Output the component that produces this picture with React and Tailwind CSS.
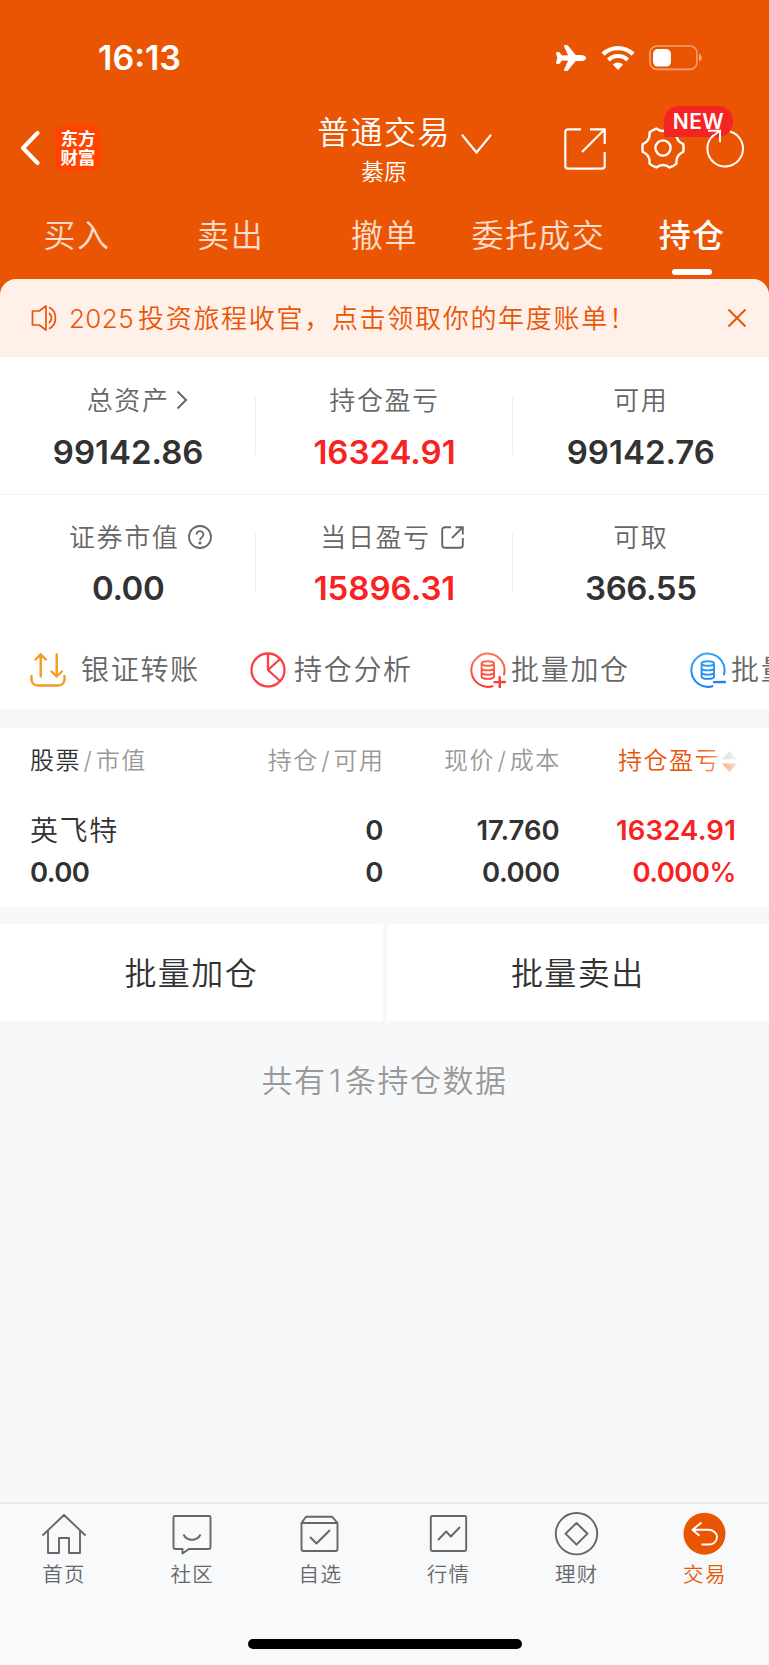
import { IoAirplane } from 'react-icons/io5'

const TABS = ['买入', '卖出', '撤单', '委托成交', '持仓']

const polar = (deg, r) => {
  const t = (deg * Math.PI) / 180
  return `${(22 + r * Math.cos(t)).toFixed(2)} ${(22 + r * Math.sin(t)).toFixed(2)}`
}

// six flat lobes joined by scooped valleys
const gearPath = `M${polar(-11, 20.6)}${[0, 60, 120, 180, 240, 300]
  .map((d) => `Q${polar(d, 20.9)} ${polar(d + 11, 20.6)}Q${polar(d + 30, 14.5)} ${polar(d + 49, 20.6)}`)
  .join('')}Z`

const StatusBar = () => (
  <div className="flex h-[105px] items-start justify-between pl-[98px] pr-[66px] pt-[37px]">
    <span className="text-[34px] font-semibold leading-[42px]">16:13</span>
    <div className="flex h-[42px] items-center">
      <IoAirplane size={32} className="mr-[14px]" />
      <svg width="34" height="26" viewBox="0 0 34 26" className="mr-[14px]" fill="none" stroke="currentColor">
        <path d="M2 9.2a21.5 21.5 0 0 1 30 0" strokeWidth="4.4" />
        <path d="M7.4 14.9a13.8 13.8 0 0 1 19.2 0" strokeWidth="4.2" />
        <path d="M17 25l-5.2-5.4a7.6 7.6 0 0 1 10.4 0z" fill="currentColor" stroke="none" />
      </svg>
      <svg width="54" height="26" viewBox="0 0 54 26" fill="none">
        <rect x="1" y="1" width="47" height="23.4" rx="7" stroke="white" strokeOpacity=".45" strokeWidth="1.6" />
        <rect x="4" y="4" width="18" height="17.6" rx="5" fill="white" />
        <path d="M50 9v7.6c1.6-.6 2.7-2 2.7-3.8S51.6 9.6 50 9z" fill="white" fillOpacity=".5" />
      </svg>
    </div>
  </div>
)

const NavBar = () => (
  <div className="flex h-[86px] items-center">
    <div className="flex w-[318px] items-center pl-[20px]">
      <svg width="20" height="34" viewBox="0 0 20 34" fill="none" stroke="currentColor" strokeWidth="4" strokeLinecap="round" strokeLinejoin="round">
        <path d="M17.5 2L3 17l14.5 15" />
      </svg>
      <div className="ml-[15px] flex h-[46px] w-[46px] flex-col items-center justify-center rounded-[10px] bg-[#ff4400] text-[17.5px] font-bold leading-[19px]">
        <span>东方</span>
        <span>财富</span>
      </div>
    </div>
    <div className="flex w-[132px] flex-col items-center pt-[6px]">
      <span className="whitespace-nowrap text-[32px] leading-[42px] tracking-[1.4px]">普通交易</span>
      <span className="text-[23px] leading-[36px]">綦原</span>
    </div>
    <svg width="31" height="21" viewBox="0 0 31 21" className="-mt-2 ml-[11px]" fill="none" stroke="currentColor" strokeWidth="2.2" strokeLinecap="round">
      <path d="M1.5 1.5l14 17 14-17" />
    </svg>
    <svg width="42" height="42" viewBox="0 0 42 42" className="ml-[72px] mt-[2px]" fill="none" stroke="currentColor" strokeWidth="2.2" strokeLinejoin="round">
      <path d="M17 1.3H4A2.7 2.7 0 0 0 1.3 4v34A2.7 2.7 0 0 0 4 40.7h34a2.7 2.7 0 0 0 2.7-2.7V24" />
      <path d="M26 1.3h14.7V16M40.7 1.3L18 24" />
    </svg>
    <div className="relative ml-[35px] h-[44px] w-[44px]">
      <svg width="44" height="44" viewBox="0 0 44 44" fill="none" stroke="currentColor" strokeWidth="2.4" strokeLinejoin="round">
        <path d={gearPath} />
        <circle cx="22" cy="22" r="7.6" />
      </svg>
      <span className="absolute -top-[20px] left-[23px] flex h-[31px] w-[69px] items-center justify-center rounded-[15px] rounded-bl-none bg-[#f52424] text-[21px] font-semibold tracking-[0.5px]">
        NEW
      </span>
    </div>
    <svg width="40" height="42" viewBox="0 0 40 42" className="relative ml-[20px]" fill="none" stroke="currentColor" strokeWidth="2">
      <path d="M25 4.5A17.8 17.8 0 1 1 8.5 8.2" />
      <path d="M3 3.8h12v11.5M15 3.8L8 9" />
    </svg>
  </div>
)

const Tabs = () => (
  <div className="grid h-[88px] grid-cols-5 text-center text-[32px] tracking-[1.4px]">
    {TABS.map((tab) => (
      <div key={tab} className={tab === '持仓' ? 'flex flex-col items-center font-medium' : 'flex flex-col items-center text-white/80'}>
        <span className="mt-[22px] whitespace-nowrap leading-[46px]">{tab}</span>
        {tab === '持仓' && <i className="mt-[10px] h-[6px] w-[40px] rounded-full bg-white" />}
      </div>
    ))}
  </div>
)

const Notice = () => (
  <div className="flex h-[78px] items-center rounded-t-[16px] bg-[#fff0e9] pl-[31px] pr-[22px] text-[#ea5504]">
    <svg width="28" height="28" viewBox="0 0 28 28" fill="none" stroke="currentColor" strokeWidth="1.7" strokeLinejoin="round">
      <path d="M1.5 7h6.7L15 2v24l-6.800-5H1.5z" />
      <path d="M18 9a6.3 6.3 0 0 1 0 10M18 3.3c8.600 4 8.600 17.400 0 21.400" />
    </svg>
    <span className="ml-[10px] whitespace-nowrap text-[26px] tracking-[1.7px]">
      <span className="mr-[4px] tracking-[0.4px]">2025</span>投资旅程收官，点击领取你的年度账单！
    </span>
    <svg width="20" height="20" viewBox="0 0 20 20" className="ml-auto" fill="none" stroke="currentColor" strokeWidth="2">
      <path d="M1.5 1.5l17 17M18.5 1.5l-17 17" />
    </svg>
  </div>
)

const RightIcon = () => (
  <svg width="12" height="20" viewBox="0 0 12 20" className="ml-[6px]" fill="none" stroke="currentColor" strokeWidth="2">
    <path d="M1.5 1.5L10 10l-8.5 8.5" />
  </svg>
)

const HelpIcon = () => (
  <svg width="24" height="24" viewBox="0 0 24 24" className="ml-[9px]" fill="none" stroke="currentColor" strokeWidth="1.8">
    <circle cx="12" cy="12" r="11" />
    <path d="M8.6 9.5a3.4 3.4 0 1 1 5.3 2.8c-1.3.9-1.9 1.5-1.9 3" />
    <circle cx="12" cy="18" r=".7" fill="currentColor" />
  </svg>
)

const OpenIcon = () => (
  <svg width="23" height="23" viewBox="0 0 23 23" className="ml-[10px]" fill="none" stroke="currentColor" strokeWidth="1.9">
    <path d="M10 1.2H4A2.8 2.8 0 0 0 1.2 4v15A2.8 2.8 0 0 0 4 21.8h15a2.8 2.8 0 0 0 2.8-2.8v-7" />
    <path d="M14.5 1.2h7.300v7.300M21.800 1.200L11 12" />
  </svg>
)

const STATS = [
  [
    { label: '总资产', value: '99142.86', icon: <RightIcon />, shift: 'pl-[18px]' },
    { label: '持仓盈亏', value: '16324.91', red: true },
    { label: '可用', value: '99142.76' }
  ],
  [
    { label: '证券市值', value: '0.00', icon: <HelpIcon />, shift: 'pl-[25px]', tight: true },
    { label: '当日盈亏', value: '15896.31', red: true, icon: <OpenIcon />, shift: 'pl-[15px]' },
    { label: '可取', value: '366.55', tight: true }
  ]
]

const StatRow = ({ items, valueGap }) => (
  <div className="grid h-[136px] grid-cols-3">
    {items.map((s, i) => (
      <div key={s.label} className="relative flex flex-col items-center pt-[24px]">
        <div className={`flex h-[38px] items-center text-[26px] tracking-[1.6px] text-[#666] ${s.shift || ''}`}>
          {s.label}
          {s.icon}
        </div>
        <div
          className={`text-[33px] font-semibold leading-[42px] ${valueGap} ${s.red ? 'text-[#f92222]' : 'text-[#323232]'} ${s.tight ? 'tracking-[-0.4px]' : ''}`}
        >
          {s.value}
        </div>
        {i < 2 && <i className="absolute right-0 top-[39px] h-[59px] w-px bg-[#f0f0f0]" />}
      </div>
    ))}
  </div>
)

const TransferIcon = () => (
  <svg width="36" height="36" viewBox="0 0 36 36" fill="none" stroke="#f59a23" strokeWidth="2.4" strokeLinecap="round" strokeLinejoin="round">
    <path d="M1.5 24v3.5a6 6 0 0 0 6 6h21a6 6 0 0 0 6-6V24" />
    <path d="M10.7 24.5V2.5M5.5 7.5l5.2-5.2 5.2 5.2M26.7 2.5v22M21.5 19.5l5.2 5 5.2-5" />
  </svg>
)

const PieIcon = () => (
  <svg width="36" height="36" viewBox="0 0 36 36" fill="none" stroke="#fb4048" strokeWidth="2.3" strokeLinejoin="round">
    <circle cx="18" cy="18" r="16.5" />
    <path d="M18 1.5V18l12 11M18 18L30 7" />
  </svg>
)

const BatchIcon = ({ id, from, to, plus }) => (
  <svg width="36" height="36" viewBox="0 0 36 36" fill="none" stroke={`url(#${id})`} strokeLinecap="round">
    <defs>
      <linearGradient id={id} gradientUnits="userSpaceOnUse" x1="0" y1="0" x2="0" y2="36">
        <stop offset="0" stopColor={from} />
        <stop offset="1" stopColor={to} />
      </linearGradient>
    </defs>
    <path d="M34 22.5A16.600 16.600 0 1 0 22.500 34.200" strokeWidth="2" />
    <ellipse cx="17.8" cy="11.5" rx="6.2" ry="2.3" strokeWidth="1.9" />
    <path d="M11.6 11.7v12.8c0 3.200 12.400 3.200 12.400 0V11.700M11.600 16c0 3.200 12.400 3.200 12.400 0M11.600 20.200c0 3.200 12.400 3.200 12.400 0" strokeWidth="1.9" />
    {plus ? <path d="M24.5 30.1L35 30M29.7 25L29.8 35.5" strokeWidth="2.4" /> : <path d="M24 30.1L35 30" strokeWidth="2.4" />}
  </svg>
)

const Actions = () => (
  <div className="flex h-[79px] items-center overflow-hidden whitespace-nowrap pl-[30px] text-[28px] tracking-[1.7px] text-[#666]">
    <div className="flex w-[220px] shrink-0 items-center gap-[15px]">
      <TransferIcon />
      银证转账
    </div>
    <div className="flex w-[220px] shrink-0 items-center gap-[8px]">
      <PieIcon />
      持仓分析
    </div>
    <div className="flex w-[220px] shrink-0 items-center gap-[5px]">
      <BatchIcon id="add" from="#ff7a52" to="#f5352b" plus />
      批量加仓
    </div>
    <div className="flex w-[220px] shrink-0 items-center gap-[5px]">
      <BatchIcon id="sell" from="#37a8f5" to="#167cf0" />
      批量卖出
    </div>
  </div>
)

const Slash = () => <span className="mx-[2.5px]">/</span>

const Holdings = () => (
  <div className="mt-[19px] h-[179px] bg-white px-[30px]">
    <div className="grid h-[66px] grid-cols-4 items-center whitespace-nowrap text-right text-[24px] tracking-[1.5px] text-[#999]">
      <div className="text-left">
        <span className="text-[#323232]">股票</span>
        <Slash />
        市值
      </div>
      <div>持仓<Slash />可用</div>
      <div className="pr-px">现价<Slash />成本</div>
      <div className="relative flex items-center justify-end pr-[2px] text-[#ea5504]">
        持仓盈亏
        <svg width="15" height="21" viewBox="0 0 15 21" className="ml-[2px]">
          <path d="M7.5 0L15 8.500H0z" fill="#bbb" />
          <path d="M7.5 21L0 12.500h15z" fill="#ea5504" />
        </svg>
        <i className="absolute -right-[2px] top-0 h-full w-[44px] bg-gradient-to-r from-white/0 to-white/90" />
      </div>
    </div>
    <div className="grid grid-cols-4 text-right text-[27.5px] font-semibold leading-[42px] text-[#323232]">
      <div className="pt-[16px] text-left text-[28px] font-[350] leading-[42px] tracking-[1.6px]">英飞特</div>
      <div className="pt-[15px] pr-px">0</div>
      <div className="pr-[2px] pt-[15px]">17.760</div>
      <div className="pr-[3px] pt-[15px] tracking-[0.2px] text-[#f92222]">16324.91</div>
      <div className="-mt-px text-left tracking-[-0.6px]">0.00</div>
      <div className="-mt-px pr-px">0</div>
      <div className="-mt-px pr-[2px] tracking-[-0.4px]">0.000</div>
      <div className="-mt-px pr-[3px] tracking-[-0.6px] text-[#f92222]">
        0.000<span className="font-medium">%</span>
      </div>
    </div>
  </div>
)

const NAV = [
  {
    label: '首页',
    icon: <path d="M1.5 23.5L23 3l21.5 20.5M7 19v22h11V26h10v15h11V19" />
  },
  {
    label: '社区',
    icon: (
      <>
        <path d="M6 4h34a1.5 1.5 0 0 1 1.5 1.5v30a1.5 1.5 0 0 1-1.5 1.5H20l-6.5 4.5V37H6a1.5 1.5 0 0 1-1.5-1.5v-30A1.5 1.5 0 0 1 6 4z" />
        <path d="M14.5 22.5c3.5 7 13.5 7 17 0" />
      </>
    )
  },
  {
    label: '自选',
    icon: <path d="M4.5 11v26a2 2 0 0 0 2 2h32a2 2 0 0 0 2-2V11zM4.500 11l4.500-6.300h26l5.500 6.300M13 25l6.500 6.500L33 18" />
  },
  {
    label: '行情',
    icon: (
      <>
        <rect x="4.800" y="4" width="35.4" height="35" rx="1.5" />
        <path d="M12 28l8.2-8.5 4.6 5L34 15" />
      </>
    )
  },
  {
    label: '理财',
    icon: (
      <>
        <circle cx="22.500" cy="21.7" r="20.7" />
        <path d="M22.500 11l11 10.700-11 11-11-11z" />
      </>
    )
  },
  {
    label: '交易',
    active: true,
    icon: (
      <>
        <circle cx="22.500" cy="21.7" r="21" fill="#ea5504" stroke="none" />
        <path d="M19.500 10.500l-9 7.300 7 6M11 17.800H26.500c4 0 8.500 3 8.500 7.200S31.500 32.500 27.500 32.500h-8" stroke="white" />
      </>
    )
  }
]

const BottomNav = () => (
  <div className="mt-auto h-[163px] border-t-2 border-[#e9eaec] bg-[#f8f9fb]">
    <div className="grid grid-cols-6 pt-[8px]">
      {NAV.map(({ label, icon, active }) => (
        <div key={label} className={`flex flex-col items-center text-[20.5px] tracking-[1.3px] ${active ? 'text-[#ea5504]' : 'text-[#666]'}`}>
          <svg width="46" height="46" viewBox="0 0 46 46" fill="none" stroke="currentColor" strokeWidth="1.9" strokeLinejoin="round">
            {icon}
          </svg>
          <span className="mt-[2px] leading-[30px]">{label}</span>
        </div>
      ))}
    </div>
    <div className="mx-auto mt-[49px] h-[10px] w-[274px] rounded-full bg-black" />
  </div>
)

const App = () => (
  <div lang="zh-CN" className="flex h-[1665px] w-[769px] flex-col overflow-hidden bg-[#f7f8fa] font-[Inter,'Noto_Sans_CJK_SC',sans-serif] font-[350] text-[#323232]">
    <div className="bg-[#ea5504] text-white">
      <StatusBar />
      <NavBar />
      <Tabs />
      <Notice />
    </div>
    <div className="h-[352px] bg-white">
      <StatRow items={STATS[0]} valueGap="mt-[12px]" />
      <div className="mt-px h-px bg-[#f4f4f4]" />
      <div className="-mt-px">
        <StatRow items={STATS[1]} valueGap="mt-[11px]" />
      </div>
      <Actions />
    </div>
    <Holdings />
    <div className="mt-[17px] grid h-[97px] grid-cols-2 gap-[4px] text-[32px] tracking-[1.4px]">
      <div className="flex items-center justify-center bg-white pt-[3px]">批量加仓</div>
      <div className="flex items-center justify-center bg-white pt-[3px]">批量卖出</div>
    </div>
    <p className="mt-[38px] text-center text-[31px] leading-[44px] tracking-[1.5px] text-[#999]">
      共有<span className="mx-[2.5px]">1</span>条持仓数据
    </p>
    <BottomNav />
  </div>
)

export default App
